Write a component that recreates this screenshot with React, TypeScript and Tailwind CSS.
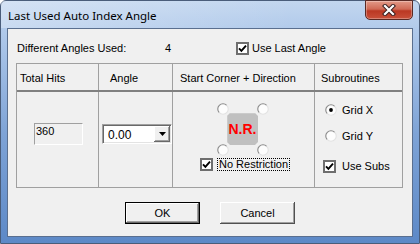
import React from "react";

const ui = "font-['Liberation_Sans',Arial,sans-serif] text-[11px] text-black";

function Check({ checked }: { checked: boolean }) {
  return (
    <span className="w-[13px] h-[13px] shrink-0 bg-white border-2 border-[#6e6e6e] flex items-center justify-center">
      {checked && (
        <svg width="9" height="9" viewBox="0 0 9 9">
          <path d="M1 4.3 L3.4 6.8 L8 1.6" fill="none" stroke="#000" strokeWidth="1.9" />
        </svg>
      )}
    </span>
  );
}

function Radio({ checked = false }: { checked?: boolean }) {
  return (
    <svg width="12" height="12" viewBox="0 0 12 12" className="shrink-0 block">
      <circle cx="6" cy="6" r="5.3" fill="#fdfdfd" />
      <path d="M2.3 9.7 A5.2 5.2 0 0 1 9.7 2.3" fill="none" stroke="#8a8a8a" strokeWidth="1.1" />
      <path d="M9.7 2.3 A5.2 5.2 0 0 1 2.3 9.7" fill="none" stroke="#e2e2e2" strokeWidth="1.1" />
      {checked && <circle cx="6" cy="6" r="1.9" fill="#000" />}
    </svg>
  );
}

function Button({ label, primary = false }: { label: string; primary?: boolean }) {
  return (
    <div
      className={
        primary
          ? "w-[75px] h-[22px] bg-[#f0f0f0] border border-black shadow-[inset_-1px_-1px_0_#696969,inset_1px_1px_0_#fff,inset_-2px_-2px_0_#a0a0a0] flex items-center justify-center"
          : "w-[75px] h-[22px] bg-[#f0f0f0] shadow-[inset_-1px_-1px_0_#505050,inset_1px_1px_0_#fff,inset_-2px_-2px_0_#a0a0a0] flex items-center justify-center"
      }
    >
      <span className="leading-[13px]">{label}</span>
    </div>
  );
}

export default function App() {
  return (
    <div className={`w-[420px] h-[244px] flex flex-col border border-[#4a5d7a] rounded-t-[6px] bg-[linear-gradient(180deg,#c2d6ef_0%,#aec8ea_14%,#7ea3d6_55%,#5d89c7_100%)] ${ui}`}>
      {/* title bar */}
      <div className="h-[27px] shrink-0 flex items-start justify-between pl-[7px] pr-[6px] bg-[linear-gradient(90deg,rgba(255,255,255,0.3),rgba(255,255,255,0)_70%)]">
        <span className="self-center pt-[2px] font-['Noto_Sans',sans-serif] text-[11.5px] text-black leading-[16px]">
          Last Used Auto Index Angle
        </span>
        <div className="mt-[-1px] w-[48px] h-[20px] rounded-b-[5px] border border-[#5a2a24] bg-[linear-gradient(180deg,#e39a88_0%,#d06a55_45%,#bb3823_55%,#c9503a_100%)] shadow-[inset_0_0_0_1px_rgba(255,255,255,0.3)] flex items-center justify-center">
          <svg width="14" height="12" viewBox="0 0 14 12">
            <path d="M3 2 L11 10 M11 2 L3 10" stroke="#3a2020" strokeWidth="4.2" strokeLinecap="square" />
            <path d="M3 2 L11 10 M11 2 L3 10" stroke="#fff" strokeWidth="2.2" strokeLinecap="square" />
          </svg>
        </div>
      </div>

      {/* client area */}
      <div className="mx-[6px] mb-[6px] flex-1 border border-[#5a6f8f] bg-[#f0f0f0] flex flex-col pl-2">
        <div className="mt-[13px] h-[13px] flex items-center pl-px">
          <span className="w-[148px] leading-[13px]">Different Angles Used:</span>
          <span className="w-[71px] leading-[13px]">4</span>
          <Check checked />
          <span className="ml-[3px] leading-[13px]">Use Last Angle</span>
        </div>

        {/* table */}
        <div className="mt-[8px] w-[387px] h-[125px] border border-[#a0a0a0] flex flex-col">
          <div className="h-[28px] shrink-0 flex border-b-2 border-[#808080]">
            <div className="w-[82px] border-r border-[#a0a0a0] pl-[3px] pt-[3px] flex items-center">Total Hits</div>
            <div className="w-[74px] border-r border-[#a0a0a0] pl-[11px] pt-[3px] flex items-center">Angle</div>
            <div className="w-[142px] border-r border-[#a0a0a0] pl-[7px] pt-[3px] flex items-center">Start Corner + Direction</div>
            <div className="flex-1 pl-[6px] pt-[3px] flex items-center">Subroutines</div>
          </div>
          <div className="flex-1 flex">
            <div className="w-[82px] border-r border-[#a0a0a0]">
              <div className="ml-[17px] mt-[31px] w-[49px] h-[22px] border border-t-[#a0a0a0] border-l-[#a0a0a0] border-b-white border-r-white pl-px pt-px leading-[13px]">
                360
              </div>
            </div>
            <div className="w-[74px] border-r border-[#a0a0a0]">
              <div className="ml-[3px] mt-[32px] w-[70px] h-[20px] bg-white border border-t-[#a0a0a0] border-l-[#a0a0a0] border-b-white border-r-white shadow-[inset_1px_1px_0_#696969,inset_-1px_-1px_0_#e3e3e3] flex items-center">
                <span className="flex-1 pl-[5px] pt-px text-[12px] leading-[14px]">0.00</span>
                <div className="w-[16px] h-[16px] mr-px bg-[#f0f0f0] shadow-[inset_-1px_-1px_0_#696969,inset_1px_1px_0_#fff,inset_-2px_-2px_0_#a0a0a0] flex items-center justify-center">
                  <svg width="7" height="4" viewBox="0 0 7 4">
                    <path d="M0 0 H7 L3.5 4 Z" fill="#000" />
                  </svg>
                </div>
              </div>
            </div>
            <div className="w-[142px] border-r border-[#a0a0a0] flex flex-col">
              <div className="relative ml-[44px] mt-[11px] w-[51px] h-[52px]">
                <svg width="31" height="32" viewBox="0 0 31 32" className="absolute left-[10px] top-[10px]">
                  <polygon points="3,0 28,0 31,3 31,29 28,32 3,32 0,29 0,3" fill="#c0c0c0" />
                  <polyline points="0,29 0,3 3,0 28,0" fill="none" stroke="#d6d6d6" strokeWidth="1" />
                </svg>
                <span className="absolute left-[10px] top-[10px] w-[31px] h-[32px] flex items-center justify-center font-bold text-[14px] text-[#ff0000] leading-[16px]">
                  N.R.
                </span>
                <span className="absolute left-0 top-0"><Radio /></span>
                <span className="absolute left-[40px] top-0"><Radio /></span>
                <span className="absolute left-0 top-[41px]"><Radio /></span>
                <span className="absolute left-[40px] top-[41px]"><Radio /></span>
              </div>
              <div className="mt-[3px] ml-[27px] flex items-center">
                <Check checked />
                <span className="ml-[4px] border border-dotted border-black px-px leading-[11px]">No Restriction</span>
              </div>
            </div>
            <div className="flex-1 flex flex-col">
              <div className="mt-[12px] ml-[10px] h-[12px] flex items-center">
                <Radio checked />
                <span className="ml-[5px] leading-[13px]">Grid X</span>
              </div>
              <div className="mt-[14px] ml-[10px] h-[12px] flex items-center">
                <Radio />
                <span className="ml-[5px] leading-[13px]">Grid Y</span>
              </div>
              <div className="mt-[18px] ml-[8px] h-[13px] flex items-center">
                <Check checked />
                <span className="ml-[6px] leading-[13px]">Use Subs</span>
              </div>
            </div>
          </div>
        </div>

        <div className="mt-[14px] flex justify-center gap-[20px] pr-2">
          <Button label="OK" primary />
          <Button label="Cancel" />
        </div>
      </div>
    </div>
  );
}
